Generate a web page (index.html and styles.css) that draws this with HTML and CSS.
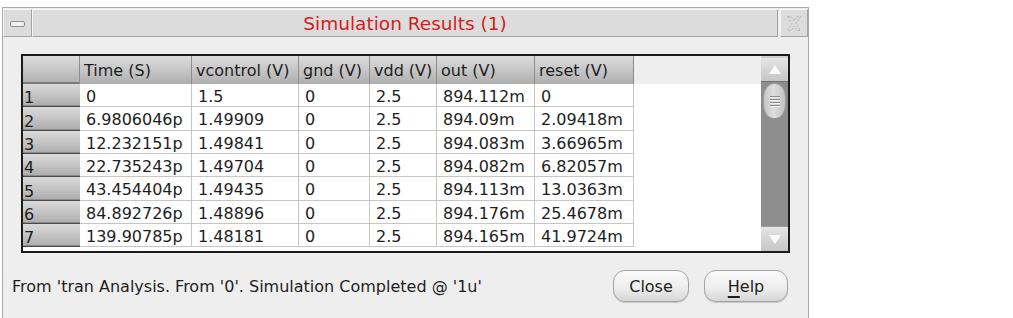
FILE: index.html
```html
<!DOCTYPE html>
<html>
  <head>
    <meta charset="UTF-8" />
    <title>Simulation Results (1)</title>
    <link rel="stylesheet" href="styles.css">
  </head>
  <body>
    <div class="dialog">
      <div class="titlebar">
        <div class="tb-btn tb-min"><span class="min-icon"></span></div>
        <div class="tb-title">Simulation Results (1)</div>
        <div class="tb-btn tb-close">
          <svg width="16" height="17" viewBox="0 0 16 17">
            <path d="M1.5 1.5 L5 1.5 L8 6 L11 1.5 L14.5 1.5 L10 8.5 L14.5 15.5 L11 15.5 L8 11 L5 15.5 L1.5 15.5 L6 8.5 Z"
                  fill="none" stroke="#b4b4b4" stroke-width="1" stroke-dasharray="2 1.5" />
          </svg>
        </div>
      </div>

      <div class="content">
        <div class="grid-frame">
          <div class="grid-area">
            <table class="results">
              <colgroup>
                <col style="width: 57px">
                <col style="width: 112px">
                <col style="width: 107px">
                <col style="width: 71px">
                <col style="width: 67px">
                <col style="width: 98px">
                <col style="width: 99px">
                <col>
              </colgroup>
              <thead>
                <tr>
                  <th class="corner"></th>
                  <th>Time (S)</th>
                  <th>vcontrol (V)</th>
                  <th>gnd (V)</th>
                  <th>vdd (V)</th>
                  <th>out (V)</th>
                  <th>reset (V)</th>
                  <th class="filler"></th>
                </tr>
              </thead>
              <tbody>
                <tr><th class="rowhead">1</th><td>0</td><td>1.5</td><td>0</td><td>2.5</td><td>894.112m</td><td>0</td><td class="filler"></td></tr>
                <tr><th class="rowhead">2</th><td>6.9806046p</td><td>1.49909</td><td>0</td><td>2.5</td><td>894.09m</td><td>2.09418m</td><td class="filler"></td></tr>
                <tr><th class="rowhead">3</th><td>12.232151p</td><td>1.49841</td><td>0</td><td>2.5</td><td>894.083m</td><td>3.66965m</td><td class="filler"></td></tr>
                <tr><th class="rowhead">4</th><td>22.735243p</td><td>1.49704</td><td>0</td><td>2.5</td><td>894.082m</td><td>6.82057m</td><td class="filler"></td></tr>
                <tr><th class="rowhead">5</th><td>43.454404p</td><td>1.49435</td><td>0</td><td>2.5</td><td>894.113m</td><td>13.0363m</td><td class="filler"></td></tr>
                <tr><th class="rowhead">6</th><td>84.892726p</td><td>1.48896</td><td>0</td><td>2.5</td><td>894.176m</td><td>25.4678m</td><td class="filler"></td></tr>
                <tr><th class="rowhead">7</th><td>139.90785p</td><td>1.48181</td><td>0</td><td>2.5</td><td>894.165m</td><td>41.9724m</td><td class="filler"></td></tr>
              </tbody>
            </table>
          </div>
          <div class="vscroll">
            <div class="sb-btn sb-up"><span class="arrow-up"></span></div>
            <div class="sb-track">
              <div class="sb-thumb">
                <span class="grip"></span><span class="grip"></span><span class="grip"></span><span class="grip"></span>
              </div>
            </div>
            <div class="sb-btn sb-down"><span class="arrow-down"></span></div>
          </div>
        </div>

        <div class="footer">
          <span class="status">From 'tran Analysis. From '0'. Simulation Completed @ '1u'</span>
          <button class="btn btn-close">Close</button>
          <button class="btn btn-help"><span class="mnemonic">H</span>elp</button>
        </div>
      </div>
    </div>
  </body>
</html>
```

FILE: styles.css
```css
body {
    margin: 0;
    background: #fff;
    font-family: "DejaVu Sans", sans-serif;
    font-size: 16px;
    color: #1e1e1e;
}
.dialog {
    box-sizing: border-box;
    margin: 7px 0 0 2px;
    width: 807px;
    height: 311px;
    border: 1px solid #a9a9a9;
    border-bottom: none;
    background: #eeeeee;
}

/* Title bar */
.titlebar {
    display: flex;
    gap: 2px;
    padding-top: 1px;
    height: 28px;
}
.tb-btn, .tb-title {
    box-sizing: border-box;
    height: 28px;
    background: #dcdcdc;
    border-top: 1px solid #f6f6f6;
    border-left: 1px solid #f6f6f6;
    border-bottom: 1px solid #a2a2a2;
    border-right: 1px solid #a2a2a2;
    display: flex;
    align-items: center;
    justify-content: center;
}
.tb-min { width: 29px; margin-right: -2px; }
.tb-close { width: 28px; }
.tb-title {
    flex: 1;
    color: #d41c1c;
    font-size: 18.5px;
}
.min-icon {
    width: 13px;
    height: 4px;
    border: 1px solid #8e8e8e;
    border-radius: 2px;
    background: #f2f2f2;
    margin-top: 2px;
}

/* Table frame */
.content { padding: 17px 18px 0 9px; }
.grid-frame {
    display: flex;
    height: 199px;
    margin-left: 9px;
    border: 2px solid #1b1b1b;
    box-sizing: border-box;
}
.grid-area {
    flex: 1;
    background: #fff;
    overflow: hidden;
}
.results {
    width: 100%;
    table-layout: fixed;
    border-collapse: separate;
    border-spacing: 0;
}
.results thead th {
    height: 28px;
    padding: 0 0 0 4px;
    text-align: left;
    font-weight: normal;
    white-space: nowrap;
    background: linear-gradient(#dcdcdc, #bdbdbd 70%, #aeaeae);
    border-right: 1px solid #8d8d8d;
    box-sizing: border-box;
}
.results thead th.corner {
    padding: 0;
    box-shadow: inset 0 -2px 0 #7a7a7a;
}
.results thead th.filler {
    background: #eeeeee;
    border-right: none;
}
.results tbody tr { height: 23.33px; }
.results td {
    padding: 3px 0 0 6px;
    white-space: nowrap;
    border-right: 1px solid #c6c6c6;
    border-bottom: 1px solid #c6c6c6;
    box-sizing: border-box;
}
.results td.filler { border: none; }
.results th.rowhead {
    padding: 0 0 0 1px;
    text-align: left;
    vertical-align: bottom;
    font-weight: normal;
    line-height: 17px;
    background: linear-gradient(#dadada, #c4c4c4 50%, #acacac);
    border-bottom: 1px solid #4a4a4a;
    box-shadow: inset 0 -1px 0 #8a8a8a;
    box-sizing: border-box;
}

/* Vertical scrollbar */
.vscroll {
    width: 27px;
    display: flex;
    flex-direction: column;
    background: #d0d0d0;
}
.sb-btn {
    height: 23px;
    display: flex;
    align-items: center;
    justify-content: center;
    background: linear-gradient(#e4e4e4, #c6c6c6);
}
.sb-up { margin-top: 2px; border-bottom: 1px solid #727272; }
.sb-down { height: 24px; border-top: 1px solid #9a9a9a; }
.arrow-up, .arrow-down {
    width: 0;
    height: 0;
    border-left: 6px solid transparent;
    border-right: 6px solid transparent;
}
.arrow-up { border-bottom: 9px solid #fbfbfb; }
.arrow-down { border-top: 9px solid #fbfbfb; }
.sb-track {
    flex: 1;
    background: #8d8d8d;
    padding: 1px 2px 0 2px;
}
.sb-thumb {
    height: 34px;
    border-radius: 11px / 14px;
    border: 1px solid #9c9c9c;
    background: linear-gradient(90deg, #c6c6c6, #dedede 45%, #c2c2c2);
    display: flex;
    flex-direction: column;
    align-items: center;
    justify-content: center;
    gap: 2px;
}
.grip {
    width: 10px;
    height: 1px;
    background: #8a8a8a;
    box-shadow: 0 1px 0 #f0f0f0;
}

/* Footer */
.footer {
    display: flex;
    align-items: center;
    padding: 17px 2px 0 0;
}
.status { flex: 1; }
.btn {
    font-family: "DejaVu Sans", sans-serif;
    font-size: 16px;
    color: #1e1e1e;
    height: 32px;
    border: 1px solid #a4a4a4;
    border-radius: 12px;
    background: linear-gradient(#fbfbfb, #ececec 60%, #d6d6d6);
    box-shadow: 0 1px 0 #c8c8c8;
    padding: 0;
}
.btn-close { width: 76px; }
.btn-help { width: 84px; margin-left: 15px; }
.mnemonic {
    text-decoration: underline;
    text-decoration-thickness: 2px;
    text-underline-offset: 4px;
}
```
